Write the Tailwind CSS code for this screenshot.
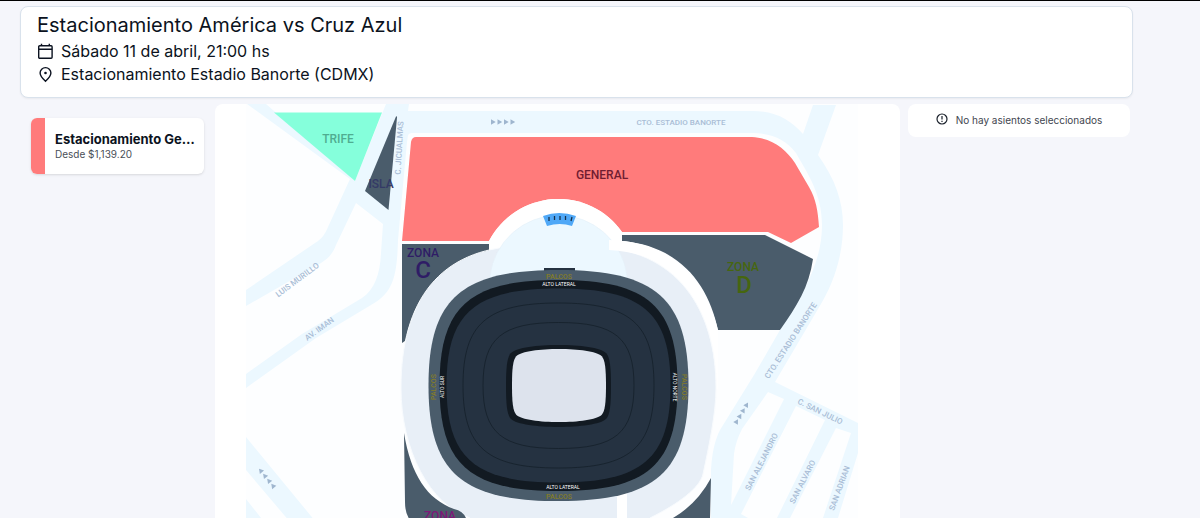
<!DOCTYPE html>
<html lang="es">
<head>
<meta charset="utf-8">
<meta name="viewport" content="width=device-width, initial-scale=1">
<title>Estacionamiento América vs Cruz Azul</title>
<script src="https://cdn.jsdelivr.net/npm/@tailwindcss/browser@4"></script>
</head>
<body class="h-screen overflow-hidden border-t border-black bg-[#f5f6fb] font-['Inter',sans-serif] text-[#0b1220]">
<div class="pt-[5px] pr-[67px] pl-5">
  <header class="rounded-lg border border-[#d9e2ec] bg-white px-4 pt-1 pb-3 shadow-xs">
    <h1 class="text-[20px] leading-7">Estacionamiento América vs Cruz Azul</h1>
    <p class="flex items-center gap-[7px] text-[16px] leading-6">
      <svg class="size-[17px]" viewBox="0 0 17 17" fill="none" stroke="currentColor" stroke-width="1.4" aria-hidden="true"><rect x="1.7" y="2.7" width="13.4" height="12.6" rx="1"/><path d="M1.7 6.2h13.4M4.5 .8v2M12.3 .8v2"/></svg>
      Sábado 11 de abril, 21:00 hs
    </p>
    <p class="flex items-center gap-[7px] text-[16px] leading-[22px]">
      <svg class="size-[17px]" viewBox="0 0 17 17" fill="none" stroke="currentColor" stroke-width="1.4" aria-hidden="true"><path d="M8.5 15.3C5 12 3.1 9.600 3.100 7a5.400 5.400 0 0 1 10.800 0c0 2.600-1.900 5-5.400 8.300z"/><circle cx="8.500" cy="7" r="1.300" fill="currentColor" stroke="none"/></svg>
      Estacionamiento Estadio Banorte (CDMX)
    </p>
  </header>
  <main class="flex items-start pt-[6px] pr-[3px]">
    <aside class="w-[195px] shrink-0 pt-[14px] pr-[11px] pl-[11px]">
      <button type="button" class="flex h-14 w-full overflow-hidden rounded-md bg-white text-left shadow-sm">
        <span class="h-full w-[14px] shrink-0 bg-[#ff7b7b]"></span>
        <span class="flex min-w-0 flex-col pt-[13px] pr-1 pl-[10px]">
          <span class="truncate text-[13px] leading-4 font-bold">Estacionamiento General</span>
          <span class="text-[10px] leading-[14px] text-[#4a4f57]">Desde $1,139.20</span>
        </span>
      </button>
    </aside>
    <section class="min-w-0 flex-1 overflow-hidden rounded-lg bg-white" aria-label="Mapa del estacionamiento">
      <svg class="block w-full font-['Roboto',sans-serif]" viewBox="215 104 685 496" text-anchor="middle">
        <defs>
          <path id="bowl" d="M-100 0C-100-75-75-100 0-100S100-75 100 0 75 100 0 100-100 75-100 0z" vector-effect="non-scaling-stroke"/>
          <path id="pitch" d="M-100 0C-100-45-98-70-91-80-80-94-40-100 0-100S80-94 91-80C98-70 100-45 100 0S98 70 91 80C80 94 40 100 0 100S-80 94-91 80C-98 70-100 45-100 0z"/>
          <path id="arrow" d="M-2-2.700 2.700 0-2 2.700z"/>
        </defs>
        <path fill="#fdfeff" d="M246 104h612v496H246z"/>
        <!-- streets -->
        <g fill="#ecf8ff">
          <path d="M247 104h19l89 77 31-77h23l-1 7h345c22 0 38 9 50 23l10-29h23l-18 50c17 24 25 46 25 70 0 32-10 60-25 84l-43 73 83 41v30l-20 65-20 82H711V470c1-18 4-30 9-40l34-55 26-45c25-39 42-69 42-105 0-32-15-52-26-72-11-14-24-20-46-20H412c-5 0-4 4-5 9l-9 98c-1 37-5 53-27 65l-55 33-70 50v-14l56-40 60-36c13-9 18-24 19-45l2-29-27-21-20 42c-3 8-7 13-15 18l-75 43v-16l69-47c7-4 10-9 13-16l22-48z"/>
          <path d="M246 437l134 163h-24L246 470zM246 499l80 101h-80z"/>
        </g>
        <g fill="#fdfeff">
          <path d="M768 392l16 7-53 106 3-51c1-9 4-17 8-25z"/>
          <path d="M796 406l29 14-48 98v82h-29v-82l-7-4z"/>
          <path d="M836 428l15 5-28 85v82h-33v-82z"/>
        </g>
        <!-- parking zones -->
        <path fill="#85ffdb" d="M274 112.500h108L355 181z"/>
        <path fill="#4a5c6b" d="M396 116.500q1-1 1 1L388.500 210 365 191z"/>
        <path fill="#ff7b7b" d="M416 137h336c20 1 34 12 43 26l14 24c7 12 9 24 10 40l-28 16-23-11H622a78 78 0 0 0-133 9h-87l9-99q1-5 5-5z"/>
        <g fill="#4a5c6b">
          <path d="M402 244h87v40l-87 59z"/>
          <path d="M622 235h143l48 24c-4 28-16 47-33 71h-62c-9-44-37-84-96-89z"/>
        </g>
        <path fill="#fff" d="M489 251v-10a78 78 0 0 1 133-9v9l-8 20H489z"/>
        <path fill="#fff" d="M610 240c65 4 95 40 108 90v60l-40-20z"/>
        <!-- stadium -->
        <path fill="#e8eff7" stroke="#f8fbfe" d="M401 388C401 300 440 249 520 246h70C678 248 716 310 716 388c0 25-7 58-13 86-3 14-25 30-53 44v82H470v-82C430 505 401 450 401 388z"/>
        <path fill="#ecf8ff" stroke="#e3eff7" stroke-width=".5" d="M490 276a69 69 0 0 1 137 0v20H490z"/>
        <path fill="#fff" d="M609 240c24 1 42 5 61 17l-5 10c-17-11-34-16-56-17zM617 480h10v120h-10z"/>
        <g fill="#4a5c6b">
          <path d="M404 433c7 42 23 66 50 76q9 2 12 9v82H412v-78q-7-6-7-20z"/>
          <path d="M711 478l-3 122h-35v-82q24-14 38-40z"/>
        </g>
        <path fill="#253241" d="M544 268h31v6h-31z"/>
        <use href="#bowl" fill="#4a5c6b" transform="translate(558.500 385.500) scale(1.300 1.155)"/>
        <use href="#bowl" fill="#121a22" transform="translate(558.500 385.500) scale(1.190 1.055)"/>
        <use href="#bowl" fill="#253241" transform="translate(558.500 385.500) scale(1.120 .970)"/>
        <use href="#bowl" fill="none" stroke="#14202a" stroke-width=".8" transform="translate(558.500 385.500) scale(.955 .825)"/>
        <use href="#bowl" fill="none" stroke="#14202a" stroke-width=".8" transform="translate(558.500 385.500) scale(.755 .630)"/>
        <use href="#pitch" fill="#121a22" transform="translate(558.500 386) scale(.525 .410)"/>
        <use href="#pitch" fill="#dde3ed" transform="translate(559 385.500) scale(.470 .365)"/>
        <path fill="#4fa8f7" d="M543 216q16-6 33 0l-4 10q-12-4-25 0z"/>
        <path stroke="#17324d" stroke-width="1.300" d="M549 217v4M554.500 216v4M560 216v4M565.500 216v4M572 217l-1 4"/>
        <!-- traffic arrows -->
        <g fill="#9fb6cf">
          <use href="#arrow" x="493" y="122"/><use href="#arrow" x="499.500" y="122"/><use href="#arrow" x="506" y="122"/><use href="#arrow" x="512.500" y="122"/>
          <g transform="translate(741.500 413.500) rotate(-59)"><use href="#arrow" x="-9.500"/><use href="#arrow" x="-3"/><use href="#arrow" x="3.500"/><use href="#arrow" x="10"/></g>
          <g transform="translate(267 478.500) rotate(-129)"><use href="#arrow" x="-9.500"/><use href="#arrow" x="-3"/><use href="#arrow" x="3.500"/><use href="#arrow" x="10"/></g>
        </g>
        <!-- zone names -->
        <g font-size="12" font-weight="500">
          <text x="338" y="143" fill="#50ad91">TRIFE</text>
          <text x="381" y="188" fill="#343a66">ISLA</text>
          <text x="602" y="179" fill="#701d31">GENERAL</text>
          <g fill="#2f1c66"><text x="423" y="257">ZONA</text><text x="423" y="278" font-size="24">C</text></g>
          <g fill="#46660f"><text x="743" y="271">ZONA</text><text x="744" y="293" font-size="24">D</text></g>
          <text x="440" y="520" fill="#7d1878">ZONA</text>
        </g>
        <g font-size="7" font-weight="500" fill="#857d28">
          <text x="559" y="279">PALCOS</text><text x="559" y="499">PALCOS</text>
          <text transform="translate(436 387) rotate(-90)">PALCOS</text><text transform="translate(682 387) rotate(90)">PALCOS</text>
        </g>
        <g font-size="5" fill="#fff">
          <text x="559" y="286">ALTO LATERAL</text><text x="563" y="489">ALTO LATERAL</text>
          <text transform="translate(444 387) rotate(-90)">ALTO SUR</text><text transform="translate(673 387) rotate(90)">ALTO NORTE</text>
        </g>
        <g font-size="8" font-weight="500" fill="#a9bdd6">
          <text x="681" y="125">CTO. ESTADIO BANORTE</text>
          <text transform="translate(402 148) rotate(-87)">C. JICUALMAS</text>
          <text transform="translate(299 282) rotate(-37)">LUIS MURILLO</text>
          <text transform="translate(321 331) rotate(-36)">AV. IMAN</text>
          <text transform="translate(793 342) rotate(-57)">CTO. ESTADIO BANORTE</text>
          <text transform="translate(819 414) rotate(26)">C. SAN JULIO</text>
          <text transform="translate(764 463) rotate(-63)">SAN ALEJANDRO</text>
          <text transform="translate(805 483) rotate(-63)">SAN ALVARO</text>
          <text transform="translate(842 489) rotate(-70)">SAN ADRIAN</text>
        </g>
      </svg>
    </section>
    <aside class="w-[230px] shrink-0 pl-2">
      <p class="flex h-[33px] items-center justify-center gap-2 rounded-lg bg-white text-[10px] text-[#3f4650]">
        <svg class="mb-1 size-[12px] text-[#1a212b]" viewBox="0 0 12 12" fill="none" stroke="currentColor" stroke-width="1.200" aria-hidden="true"><circle cx="6" cy="6" r="5"/><path d="M6 3v3.600M6 7.800v1.200"/></svg>
        No hay asientos seleccionados
      </p>
    </aside>
  </main>
</div>
</body>
</html>
